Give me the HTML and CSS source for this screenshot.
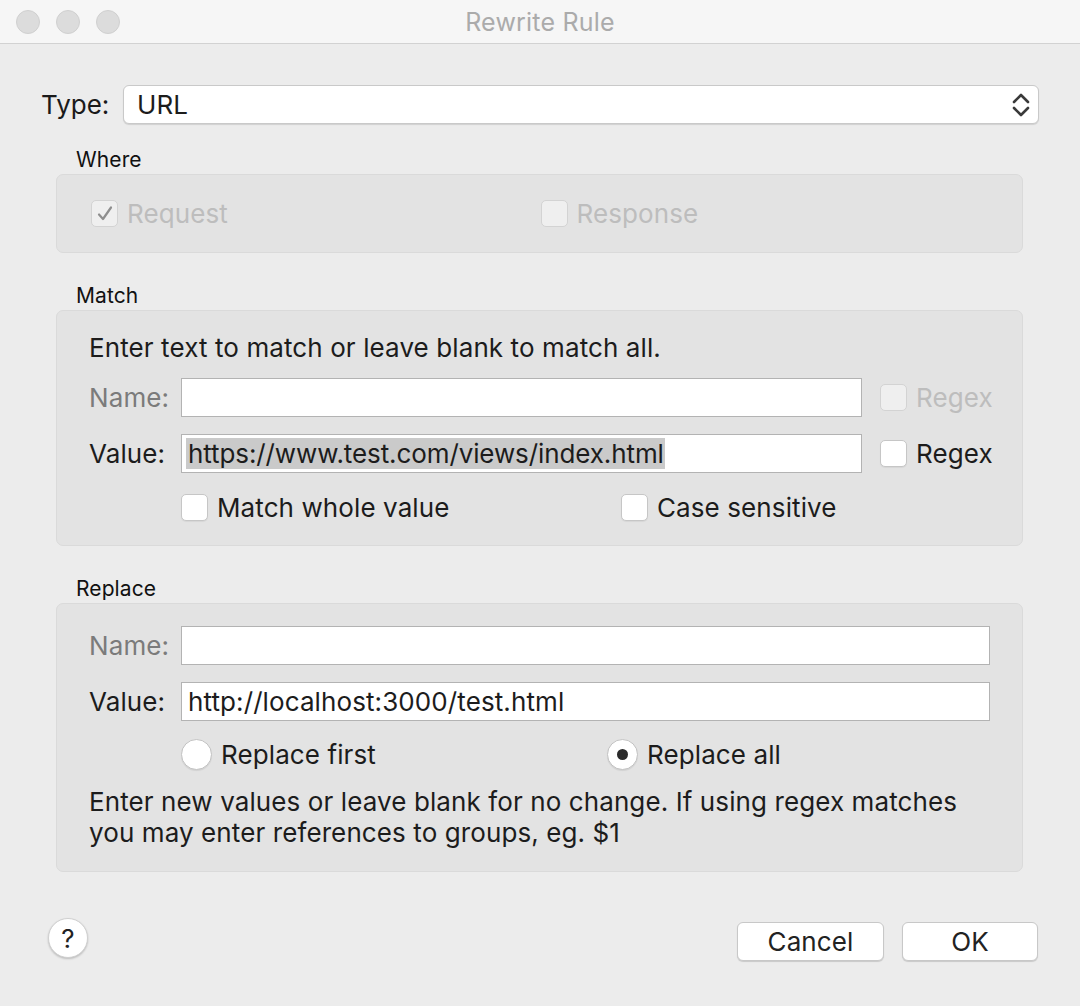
FILE: index.html
```html
<!DOCTYPE html>
<html>
<head>
<meta charset="utf-8">
<link rel="stylesheet" href="styles.css">
</head>
<body>
<div class="window">
  <div class="titlebar">
    <div class="lights">
      <span class="light"></span><span class="light"></span><span class="light"></span>
    </div>
    <div class="title">Rewrite Rule</div>
    <div></div>
  </div>
  <div class="content">
    <div class="type-row">
      <span class="type-label">Type:</span>
      <div class="select">
        <span>URL</span>
        <svg class="updown" width="18" height="24" viewBox="0 0 18 24"><path d="M2 9 L9 2 L16 9 M2 15 L9 22 L16 15" fill="none" stroke="#3a3a3a" stroke-width="2.6" stroke-linecap="round" stroke-linejoin="round"/></svg>
      </div>
    </div>

    <div class="group-label where-label">Where</div>
    <div class="group where">
      <label class="check disabled"><span class="cbox"><svg width="20" height="20" viewBox="0 0 20 20"><path d="M4 10.5 L8 15 L16 3.5" fill="none" stroke="#8e8e8e" stroke-width="2.2" stroke-linecap="round" stroke-linejoin="round"/></svg></span>Request</label>
      <label class="check disabled"><span class="cbox"></span>Response</label>
    </div>

    <div class="group-label match-label">Match</div>
    <div class="group match">
      <div class="desc">Enter text to match or leave blank to match all.</div>
      <div class="form match-form">
        <span class="flabel dim">Name:</span>
        <div class="input"></div>
        <label class="check disabled rx"><span class="cbox"></span>Regex</label>
        <span class="flabel">Value:</span>
        <div class="input"><span class="sel">https://www.test.com/views/index.html</span></div>
        <label class="check rx"><span class="cbox"></span>Regex</label>
        <div class="opts">
          <label class="check"><span class="cbox"></span>Match whole value</label>
          <label class="check case"><span class="cbox"></span>Case sensitive</label>
        </div>
      </div>
    </div>

    <div class="group-label replace-label">Replace</div>
    <div class="group replace">
      <div class="form replace-form">
        <span class="flabel dim">Name:</span>
        <div class="input"></div>
        <span class="flabel">Value:</span>
        <div class="input"><span class="val">http://localhost:3000/test.html</span></div>
        <div class="opts radios">
          <label class="radio first"><span class="rbox"></span>Replace first</label>
          <label class="radio all"><span class="rbox on"></span>Replace all</label>
        </div>
      </div>
      <div class="help-text">Enter new values or leave blank for no change. If using regex matches<br>you may enter references to groups, eg. $1</div>
    </div>

    <div class="footer">
      <div class="help-btn">?</div>
      <div class="buttons">
        <div class="btn cancel">Cancel</div>
        <div class="btn ok">OK</div>
      </div>
    </div>
  </div>
</div>
</body>
</html>
```

FILE: styles.css
```css
* { box-sizing: border-box; }
html, body { margin: 0; padding: 0; }
body {
  width: 1080px;
  height: 1006px;
  background: #ececec;
  font-family: "Inter", "Liberation Sans", sans-serif;
  font-size: 26px;
  letter-spacing: 0.1px;
  color: #1c1c1c;
  overflow: hidden;
}
.window { width: 1080px; height: 1006px; }

.titlebar {
  height: 44px;
  background: #f6f6f6;
  border-bottom: 1px solid #d2d2d2;
  display: grid;
  grid-template-columns: 1fr auto 1fr;
  align-items: center;
}
.lights { display: flex; gap: 16px; padding-left: 16px; }
.light {
  width: 24px; height: 24px; border-radius: 50%;
  background: #dcdcdc;
  border: 1px solid #d0d0d0;
}
.title { font-size: 25px; letter-spacing: 0.2px; color: #ababab; }

.content { padding: 41px 41px 0 41px; }

.type-row { display: flex; align-items: center; height: 39px; }
.type-label { width: 82px; color: #1a1a1a; letter-spacing: 0; }
.select {
  flex: 1;
  height: 39px;
  background: #fff;
  border: 1px solid #c9c9c9;
  border-radius: 6px;
  box-shadow: 0 1px 1px rgba(0,0,0,0.12);
  display: flex; align-items: center; justify-content: space-between;
  padding: 0 8px 0 13px;
}
.updown { display: block; }

.group-label {
  margin: 0 16px 1px 35px;
  font-size: 21px;
  line-height: 26px;
  letter-spacing: 0.1px;
  color: #111;
}
.where-label { margin-top: 23px; }
.match-label { margin-top: 30px; }
.replace-label { margin-top: 30px; }
.group {
  margin: 0 16px 0 15px;
  background: #e3e3e3;
  border: 1px solid #dadada;
  border-radius: 7px;
}

.where {
  height: 79px;
  display: grid;
  grid-template-columns: 1fr 1fr;
  align-items: center;
  padding: 0 32px 0 34px;
}

.check { display: flex; align-items: center; gap: 9px; line-height: 30px; }
.cbox {
  width: 27px; height: 27px;
  border-radius: 5px;
  background: #fff;
  border: 1px solid #c6c6c6;
  box-shadow: 0 1px 1px rgba(0,0,0,0.06);
  display: flex; align-items: center; justify-content: center;
  flex: none;
}
.check.disabled { color: #bdbdbd; }
.check.disabled .cbox { background: #efefef; border-color: #d3d3d3; box-shadow: none; }

.match { padding: 22px 32px 24px 32px; }
.desc { line-height: 30px; margin-bottom: 15px; }

.form {
  display: grid;
  align-items: center;
  row-gap: 17px;
}
.match-form { grid-template-columns: 92px 681px minmax(0, 1fr); }
.replace-form { grid-template-columns: 92px minmax(0, 1fr); }
.flabel { line-height: 30px; }
.flabel.dim { color: #7b7b7b; }
.input {
  height: 39px;
  background: #fff;
  border: 1px solid #b3b3b3;
  display: flex; align-items: center;
  padding-left: 4px;
  min-width: 0;
}
.sel { background: #cacaca; line-height: 31px; padding: 0 1px 0 2px; white-space: nowrap; letter-spacing: -0.1px; }
.val { padding-left: 2px; white-space: nowrap; }
.rx { margin-left: 18px; }

.opts {
  grid-column: 2 / 4;
  display: flex;
  align-items: center;
  margin-top: 4px;
  height: 27px;
}
.opts .check:first-child { width: 440px; flex: none; }

.replace { padding: 22px 32px 23px 32px; }
.radios { grid-column: 2 / 3; height: 31px; margin-top: 1px; }
.radio { display: flex; align-items: center; gap: 9px; line-height: 30px; flex: none; }
.radio.first { width: 426px; }
.rbox {
  width: 31px; height: 31px; border-radius: 50%;
  background: #fff;
  border: 1px solid #c3c3c3;
  box-shadow: 0 1px 1px rgba(0,0,0,0.08);
  display: flex; align-items: center; justify-content: center;
  flex: none;
}
.rbox.on::after {
  content: "";
  width: 11px; height: 11px; border-radius: 50%;
  background: #2a2a2a;
}
.help-text { margin-top: 16px; line-height: 31px; }

.footer {
  display: flex;
  justify-content: space-between;
  align-items: flex-start;
  margin-top: 46px;
  padding: 0 1px 0 7px;
}
.help-btn {
  width: 40px; height: 40px; border-radius: 50%;
  background: #fff;
  border: 1px solid #d0d0d0;
  box-shadow: 0 1px 2px rgba(0,0,0,0.2);
  display: flex; align-items: center; justify-content: center;
  font-size: 26px; color: #222;
}
.buttons { display: flex; gap: 18px; margin-top: 4px; }
.btn {
  height: 39px;
  background: #fff;
  border: 1px solid #c8c8c8;
  border-radius: 6px;
  box-shadow: 0 1px 1px rgba(0,0,0,0.15);
  display: flex; align-items: center; justify-content: center;
  color: #222;
}
.cancel { width: 147px; }
.ok { width: 136px; }
```
